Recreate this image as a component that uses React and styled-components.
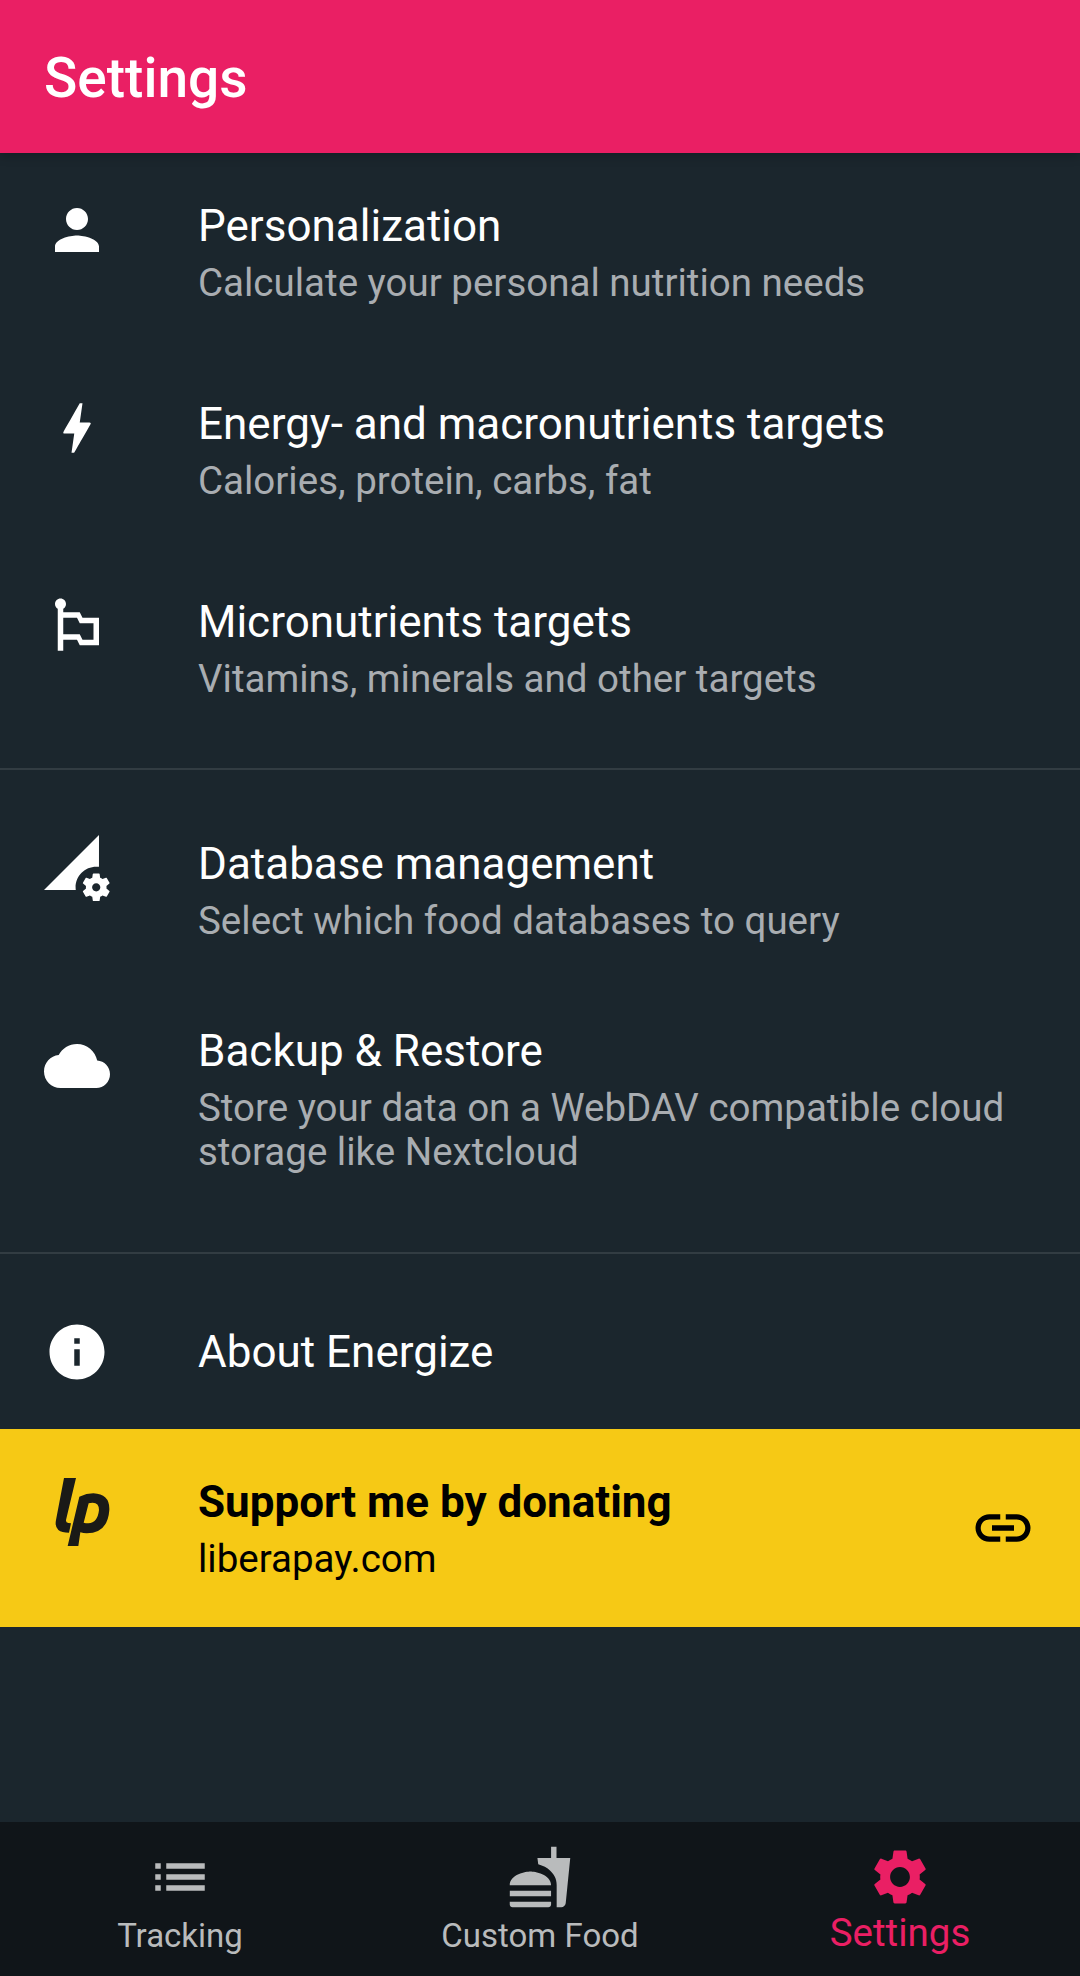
import React from 'react';
import styled, { createGlobalStyle } from 'styled-components';

const colors = {
  primary: '#ea1f64',
  background: '#1b262d',
  nav: '#101519',
  yellow: '#f6c915',
  muted: '#a9adb1',
  navMuted: '#b9bbbc',
};

const GlobalStyle = createGlobalStyle`
  html, body {
    margin: 0;
    padding: 0;
    background: ${colors.background};
    font-family: Roboto, "Liberation Sans", sans-serif;
  }
`;

const Page = styled.div`
  width: 1080px;
  height: 1976px;
  display: flex;
  flex-direction: column;
  background: ${colors.background};
  overflow: hidden;
`;

const Header = styled.header`
  position: relative;
  z-index: 1;
  flex: 0 0 153px;
  box-sizing: border-box;
  display: flex;
  align-items: center;
  padding: 2px 44px 0;
  background: ${colors.primary};
  box-shadow: 0 3px 10px rgba(0, 0, 0, 0.22);
`;

const HeaderTitle = styled.h1`
  margin: 0;
  font-size: 55px;
  font-weight: 500;
  color: #fff;
`;

const List = styled.main`
  flex: 1;
  display: flex;
  flex-direction: column;
`;

const Tile = styled.div`
  height: ${(p) => p.$height || 198}px;
  box-sizing: border-box;
  display: flex;
  align-items: ${(p) => (p.$center ? 'center' : 'flex-start')};
  padding: ${(p) => (p.$center ? '0 44px' : `${p.$top ?? 44}px 44px 0`)};
  background: ${(p) => (p.$highlight ? colors.yellow : 'transparent')};
  color: ${(p) => (p.$highlight ? '#000' : '#fff')};
`;

const Leading = styled.div`
  flex: 0 0 154px;
  height: 66px;
  margin-top: ${(p) => p.$offset || 0}px;
`;

const Texts = styled.div`
  flex: 1;
  min-width: 0;
`;

const Title = styled.div`
  font-size: 44px;
  line-height: 58px;
  font-weight: ${(p) => (p.$bold ? 700 : 400)};
`;

const Subtitle = styled.div`
  margin-top: 6px;
  font-size: 38.5px;
  line-height: 44px;
  color: ${(p) => (p.$dark ? '#000' : colors.muted)};
`;

const Divider = styled.div`
  flex: 0 0 44px;
  display: flex;
  align-items: center;
  &::after {
    content: '';
    flex: 1;
    height: 2px;
    background: rgba(255, 255, 255, 0.1);
  }
`;

const Trailing = styled.div`
  flex: 0 0 66px;
  height: 66px;
  margin-top: 22px;
`;

const Svg = styled.svg`
  display: block;
  width: 66px;
  height: 66px;
  fill: currentColor;
`;

const NavBar = styled.nav`
  flex: 0 0 154px;
  display: flex;
  background: ${colors.nav};
`;

const NavItem = styled.div`
  flex: 1;
  display: flex;
  flex-direction: column;
  align-items: center;
  padding-top: 22px;
  color: ${(p) => (p.$active ? colors.primary : colors.navMuted)};
`;

const NavLabel = styled.span`
  margin-top: ${(p) => (p.$active ? 1 : 7)}px;
  font-size: ${(p) => (p.$active ? 38.5 : 33)}px;
  line-height: ${(p) => (p.$active ? 44 : 38)}px;
`;

const LogoSvg = styled.svg`
  display: block;
  width: 75px;
  height: 85px;
  margin: -3px 0 0 1px;
  fill: #1a1a17;
`;

const icons = {
  person: 'M12 12c2.21 0 4-1.79 4-4s-1.79-4-4-4-4 1.79-4 4 1.79 4 4 4zm0 2c-2.67 0-8 1.34-8 4v2h16v-2c0-2.66-5.33-4-8-4z',
  bolt: 'M11 21h-1l1-7H7.5c-.58 0-.57-.32-.38-.66.19-.34.05-.08.07-.12C8.48 10.94 10.42 7.54 13 3h1l-1 7h3.5c.49 0 .56.33.47.51l-.07.15C12.96 17.55 11 21 11 21z',
  flag: 'M14 9l-1-2H7V5.72C7.6 5.38 8 4.74 8 4c0-1.1-.9-2-2-2S4 2.9 4 4c0 .74.4 1.38 1 1.72V21h2v-4h5l1 2h7V9h-6zm4 8h-4l-1-2H7V9h5l1 2h5v6z',
  database: 'M18.99 11.5c.34 0 .67.03 1 .07L20 0 0 20h11.56c-.04-.33-.07-.66-.07-1 0-4.14 3.36-7.5 7.5-7.5zm3.71 7.99c.02-.16.04-.32.04-.49 0-.17-.01-.33-.04-.49l1.06-.83c.09-.08.12-.21.06-.32l-1-1.73c-.06-.11-.19-.15-.31-.11l-1.24.5c-.26-.2-.54-.37-.85-.49l-.19-1.32c-.01-.12-.12-.21-.24-.21h-2c-.12 0-.23.09-.25.21l-.19 1.32c-.3.13-.59.29-.85.49l-1.24-.5c-.11-.04-.24 0-.31.11l-1 1.73c-.06.11-.04.24.06.32l1.06.83c-.02.16-.03.32-.03.49 0 .17.01.33.03.49l-1.06.83c-.09.08-.12.21-.06.32l1 1.73c.06.11.19.15.31.11l1.24-.5c.26.2.54.37.85.49l.19 1.32c.02.12.12.21.25.21h2c.12 0 .23-.09.25-.21l.19-1.32c.3-.13.58-.29.84-.49l1.25.5c.11.04.24 0 .31-.11l1-1.73c.06-.11.03-.24-.06-.32l-1.07-.83zm-3.71 1.01c-.83 0-1.5-.67-1.5-1.5s.67-1.5 1.5-1.5 1.5.67 1.5 1.5-.67 1.5-1.5 1.5z',
  cloud: 'M19.35 10.04C18.67 6.59 15.64 4 12 4 9.11 4 6.6 5.64 5.35 8.04 2.34 8.36 0 10.91 0 14c0 3.31 2.69 6 6 6h13c2.76 0 5-2.24 5-5 0-2.64-2.05-4.78-4.65-4.96z',
  info: 'M12 2C6.48 2 2 6.48 2 12s4.48 10 10 10 10-4.48 10-10S17.52 2 12 2zm1 15h-2v-6h2v6zm0-8h-2V7h2v2z',
  link: 'M3.9 12c0-1.71 1.39-3.1 3.1-3.1h4V7H7c-2.76 0-5 2.24-5 5s2.24 5 5 5h4v-1.9H7c-1.71 0-3.1-1.39-3.1-3.1zM8 13h8v-2H8v2zm9-6h-4v1.9h4c1.71 0 3.1 1.39 3.1 3.1s-1.39 3.1-3.1 3.1h-4V17h4c2.76 0 5-2.24 5-5s-2.24-5-5-5z',
  list: 'M3 13h2v-2H3v2zm0 4h2v-2H3v2zm0-8h2V7H3v2zm4 4h14v-2H7v2zm0 4h14v-2H7v2zM7 7v2h14V7H7z',
  fastfood: 'M18.06 22.99h1.66c.84 0 1.53-.64 1.63-1.46L23 5.05h-5V1h-1.97v4.05h-4.97l.3 2.34c1.71.47 3.31 1.32 4.27 2.26 1.44 1.42 2.43 2.89 2.43 5.29v8.05zM1 21.99V21h15.03v.99c0 .56-.45 1.01-1.01 1.01H2.01c-.56 0-1.01-.45-1.01-1.01zm15.03-7c0-4-6.03-5-7.52-5-1.5 0-7.51 1-7.51 5h15.03zM1.02 17h15v2h-15v-2z',
  settings: 'M19.14 12.94c.04-.3.06-.61.06-.94 0-.32-.02-.64-.07-.94l2.03-1.58c.18-.14.23-.41.12-.61l-1.92-3.32c-.12-.22-.37-.29-.59-.22l-2.39.96c-.5-.38-1.03-.7-1.62-.94l-.36-2.54c-.04-.24-.24-.41-.48-.41h-3.84c-.24 0-.43.17-.47.41l-.36 2.54c-.59.24-1.13.57-1.62.94l-2.39-.96c-.22-.08-.47 0-.59.22L2.74 8.87c-.12.21-.08.47.12.61l2.03 1.58c-.05.3-.09.63-.09.94s.02.64.07.94l-2.03 1.58c-.18.14-.23.41-.12.61l1.92 3.32c.12.22.37.29.59.22l2.39-.96c.5.38 1.03.7 1.62.94l.36 2.54c.05.24.24.41.48.41h3.84c.24 0 .44-.17.47-.41l.36-2.54c.59-.24 1.13-.56 1.62-.94l2.39.96c.22.08.47 0 .59-.22l1.92-3.32c.12-.22.07-.47-.12-.61l-2.01-1.58zM12 15.6c-1.98 0-3.6-1.62-3.6-3.6s1.62-3.6 3.6-3.6 3.6 1.62 3.6 3.6-1.62 3.6-3.6 3.6z',
};

const Icon = ({ name }) => (
  <Svg viewBox="0 0 24 24">
    <path d={icons[name]} />
  </Svg>
);

// traced from the liberapay "lp" mark
const LiberapayLogo = () => (
  <LogoSvg viewBox="0 0 225 255">
    <path d="M57 24 L93 24 L63 150 Q62 158 70 159 L78 160 L72 188 Q50 188 40 180 Q29 170 33 150 Z" />
    <path
      fillRule="evenodd"
      d="M103 80 Q125 70 145 70 Q195 72 193 120 Q188 190 125 190 Q115 190 106 187 L100 228 L68 228 Z M131 100 L116 158 Q122 160 130 160 Q158 158 162 120 Q162 98 143 98 Q135 98 131 100 Z"
    />
  </LogoSvg>
);

const groups = [
  [
    { icon: 'person', title: 'Personalization', subtitle: 'Calculate your personal nutrition needs' },
    { icon: 'bolt', title: 'Energy- and macronutrients targets', subtitle: 'Calories, protein, carbs, fat' },
    { icon: 'flag', title: 'Micronutrients targets', subtitle: 'Vitamins, minerals and other targets' },
  ],
  [
    { icon: 'database', title: 'Database management', subtitle: 'Select which food databases to query' },
    {
      icon: 'cloud',
      title: 'Backup & Restore',
      subtitle: 'Store your data on a WebDAV compatible cloud storage like Nextcloud',
      height: 242,
      top: 33,
      offset: 11,
    },
  ],
];

const tabs = [
  { icon: 'list', label: 'Tracking' },
  { icon: 'fastfood', label: 'Custom Food' },
  { icon: 'settings', label: 'Settings', active: true },
];

const App = () => {
  return (
    <Page>
      <GlobalStyle />
      <Header>
        <HeaderTitle>Settings</HeaderTitle>
      </Header>
      <List>
        {groups.map((items, i) => (
          <React.Fragment key={i}>
            {items.map((item) => (
              <Tile key={item.title} $height={item.height} $top={item.top}>
                <Leading $offset={item.offset}>
                  <Icon name={item.icon} />
                </Leading>
                <Texts>
                  <Title>{item.title}</Title>
                  <Subtitle>{item.subtitle}</Subtitle>
                </Texts>
              </Tile>
            ))}
            <Divider />
          </React.Fragment>
        ))}
        <Tile $height={154} $center>
          <Leading>
            <Icon name="info" />
          </Leading>
          <Texts>
            <Title>About Energize</Title>
          </Texts>
        </Tile>
        <Tile $highlight>
          <Leading>
            <LiberapayLogo />
          </Leading>
          <Texts>
            <Title $bold>Support me by donating</Title>
            <Subtitle $dark>liberapay.com</Subtitle>
          </Texts>
          <Trailing>
            <Icon name="link" />
          </Trailing>
        </Tile>
      </List>
      <NavBar>
        {tabs.map((tab) => (
          <NavItem key={tab.label} $active={tab.active}>
            <Icon name={tab.icon} />
            <NavLabel $active={tab.active}>{tab.label}</NavLabel>
          </NavItem>
        ))}
      </NavBar>
    </Page>
  );
};

export default App;
